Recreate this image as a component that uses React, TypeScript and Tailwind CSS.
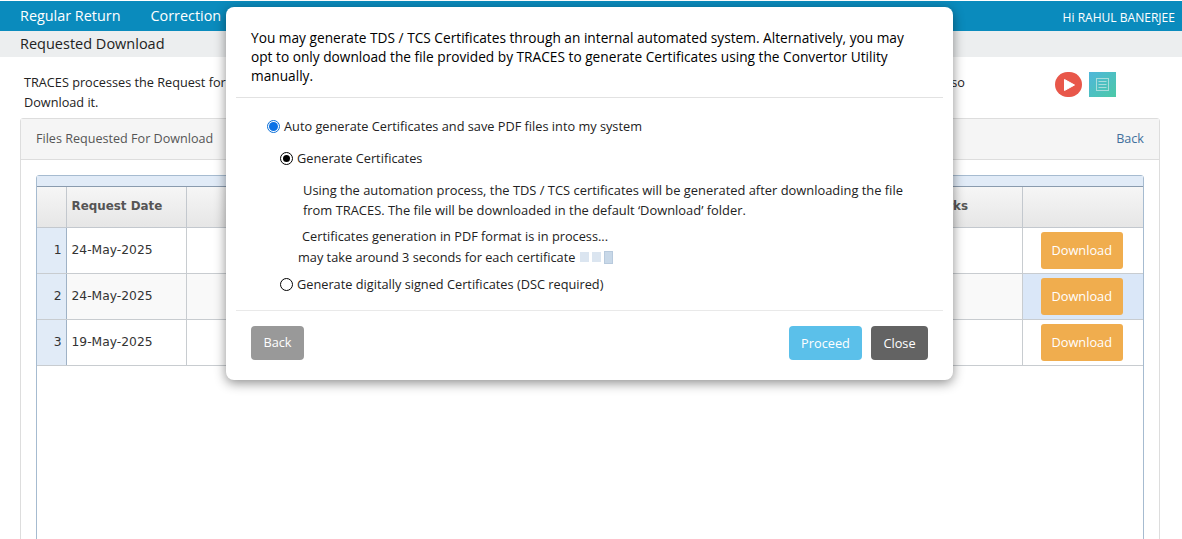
import React from 'react';

const rows = [
  { no: 1, date: '24-May-2025' },
  { no: 2, date: '24-May-2025' },
  { no: 3, date: '19-May-2025' },
];

const Radio = ({ kind }: { kind: 'blue' | 'black' | 'empty' }) => {
  if (kind === 'blue') {
    return (
      <span className="flex h-[13px] w-[13px] shrink-0 items-center justify-center rounded-full border border-[#0a6fd8] bg-white">
        <span className="h-[9px] w-[9px] rounded-full bg-[#0b72e6]" />
      </span>
    );
  }
  return (
    <span className="flex h-[13px] w-[13px] shrink-0 items-center justify-center rounded-full border border-black bg-white">
      {kind === 'black' && <span className="h-[7px] w-[7px] rounded-full bg-black" />}
    </span>
  );
};

export default function App() {
  return (
    <div className="relative h-[539px] overflow-hidden bg-white font-['Open_Sans',sans-serif] text-[#333]">
      <div className="h-px bg-white" />
      <div className="flex h-[30px] items-center justify-between bg-[#0a8bbd] pl-5 pr-[7px] text-white">
        <div className="flex gap-[30px] text-[14.4px]">
          <span>Regular Return</span>
          <span>Correction</span>
        </div>
        <span className="translate-y-[2px] text-[12.05px]">Hi RAHUL BANERJEE</span>
      </div>
      <div className="flex h-[26px] items-center bg-[#eceeef] pb-px pl-5 text-[14.5px] text-[#222]">
        Requested Download
      </div>

      <div className="flex items-start pl-6 pt-[15px]">
        <div className="w-[941px] text-[12.7px] leading-[20px] text-[#222]">
          <div className="flex justify-between">
            <span>TRACES processes the Request for</span>
            <span>so</span>
          </div>
          <div>Download it.</div>
        </div>
        <div className="ml-[90px] flex items-center gap-[7px]">
          <span className="flex h-[25px] w-[27px] items-center justify-center rounded-full bg-[#e8574a]">
            <svg width="14" height="14" viewBox="0 0 14 14">
              <path d="M2.5 1.5 L12.5 7 L2.5 12.5 Z" fill="#fff" stroke="#fff" strokeLinejoin="round" />
            </svg>
          </span>
          <span className="flex h-[25px] w-[27px] items-center justify-center bg-gradient-to-br from-[#50b6da] to-[#4cc9a6]">
            <svg width="15" height="15" viewBox="0 0 15 15" fill="none" stroke="#a9dcdc" strokeWidth="1">
              <rect x="1.5" y="1.5" width="12" height="12" />
              <path d="M3.5 4.5h8M3.5 7.5h8M3.5 10.5h8" />
            </svg>
          </span>
        </div>
      </div>

      <div className="ml-[20px] mt-[6px] w-[1140px] rounded-t-[3px] border border-[#ddd]">
        <div className="flex h-[41px] items-center justify-between border-b border-[#ddd] bg-[#f5f5f5] px-[15px] pt-px text-[12.6px]">
          <span className="text-[#555]">Files Requested For Download</span>
          <span className="text-[#41709c]">Back</span>
        </div>
        <div className="px-[15px] pt-[15px]">
          <div className="h-[400px] rounded-t-[3px] border border-[#a6bbd0] font-['DejaVu_Sans',sans-serif]">
            <div className="h-[11px] border-b border-[#8a9bae] bg-[#e1ebf7]" />
            <table className="w-full table-fixed border-collapse text-[12.3px] text-[#333]">
              <colgroup>
                <col className="w-[29px]" />
                <col className="w-[120px]" />
                <col />
                <col className="w-[125px]" />
                <col className="w-[121px]" />
              </colgroup>
              <thead>
                <tr className="h-[40px] bg-gradient-to-b from-[#f6f6f6] to-[#e6e6e6] text-left text-[11.9px] font-bold text-[#555]">
                  <th className="border-r border-b border-[#c3c8ce]" />
                  <th className="border-r border-b border-[#c3c8ce] pl-[5px]">Request Date</th>
                  <th className="border-r border-b border-[#c3c8ce]" />
                  <th className="border-r border-b border-[#c3c8ce] pl-[12px]">Remarks</th>
                  <th className="border-b border-[#c3c8ce]" />
                </tr>
              </thead>
              <tbody>
                {rows.map((row) => (
                  <tr key={row.no} className={row.no === 2 ? 'h-[46px] bg-[#f9f9f9]' : 'h-[46px] bg-white'}>
                    <td className="border-r border-b border-r-[#9fb2c6] border-b-[#c8ccd0] bg-[#e1ebf7] pr-[4px] pt-px text-right">{row.no}</td>
                    <td className="border-r border-b border-[#c8ccd0] pl-[5px] pt-px">{row.date}</td>
                    <td className="border-r border-b border-[#c8ccd0]" />
                    <td className="border-r border-b border-[#c8ccd0]" />
                    <td className={row.no === 2 ? 'border-b border-[#c8ccd0] bg-[#dae7f8] pr-[2px] text-center' : 'border-b border-[#c8ccd0] pr-[2px] text-center'}>
                      <button className="h-[37px] w-[82px] rounded-[3px] bg-[#f0ad4e] pt-px font-['Open_Sans',sans-serif] text-[12.8px] font-medium text-white">
                        Download
                      </button>
                    </td>
                  </tr>
                ))}
              </tbody>
            </table>
          </div>
        </div>
      </div>

      {/* modal sits over the page */}
      <div className="absolute left-[226px] top-[7px] h-[373px] w-[727px] rounded-[8px] bg-white shadow-[0_3px_12px_rgba(0,0,0,0.45)]">
        <div className="mx-[10px] border-b border-[#e2e2e2] px-[15px] pb-[12px] pt-[21px] text-[13.7px] font-medium leading-[19px] text-black">
          You may generate TDS / TCS Certificates through an internal automated system. Alternatively, you may
          <br />
          opt to only download the file provided by TRACES to generate Certificates using the Convertor Utility
          <br />
          manually.
        </div>
        <div className="mx-[10px] h-[213px] border-b border-[#e9e9e9] text-[12.75px] text-[#222]">
          <div className="flex items-center gap-[4px] pl-[31px] pt-[19px]">
            <Radio kind="blue" />
            <span>Auto generate Certificates and save PDF files into my system</span>
          </div>
          <div className="flex items-center gap-[4px] pl-[44px] pt-[13px]">
            <Radio kind="black" />
            <span>Generate Certificates</span>
          </div>
          <p className="pl-[67px] pt-[12px] text-[12.9px] leading-[20px]">
            Using the automation process, the TDS / TCS certificates will be generated after downloading the file
            <br />
            from TRACES. The file will be downloaded in the default ‘Download’ folder.
          </p>
          <div className="pl-[66px] pt-[6px] leading-[20px]">Certificates generation in PDF format is in process...</div>
          <div className="mt-px flex items-center pl-[62px] leading-[20px]">
            <span>may take around 3 seconds for each certificate</span>
            <span className="ml-[5px] flex items-center gap-[3px]">
              <span className="h-[10px] w-[9px] bg-[#dbe5f0]" />
              <span className="h-[10px] w-[9px] bg-[#dbe5f0]" />
              <span className="h-[13px] w-[9px] border border-[#b8cadd] bg-[#c8d8e8]" />
            </span>
          </div>
          <div className="flex items-center gap-[4px] pl-[44px] pt-[8px]">
            <Radio kind="empty" />
            <span>Generate digitally signed Certificates (DSC required)</span>
          </div>
        </div>
        <div className="flex items-center justify-between px-[25px] pt-[15px] text-[12.75px] text-white">
          <button className="h-[34px] w-[53px] rounded-[4px] bg-[#999]">Back</button>
          <div className="flex gap-[9px]">
            <button className="h-[34px] w-[73px] rounded-[4px] bg-[#5bc0ea] pt-px">Proceed</button>
            <button className="h-[34px] w-[57px] rounded-[4px] bg-[#636363] pt-px">Close</button>
          </div>
        </div>
      </div>
    </div>
  );
}
